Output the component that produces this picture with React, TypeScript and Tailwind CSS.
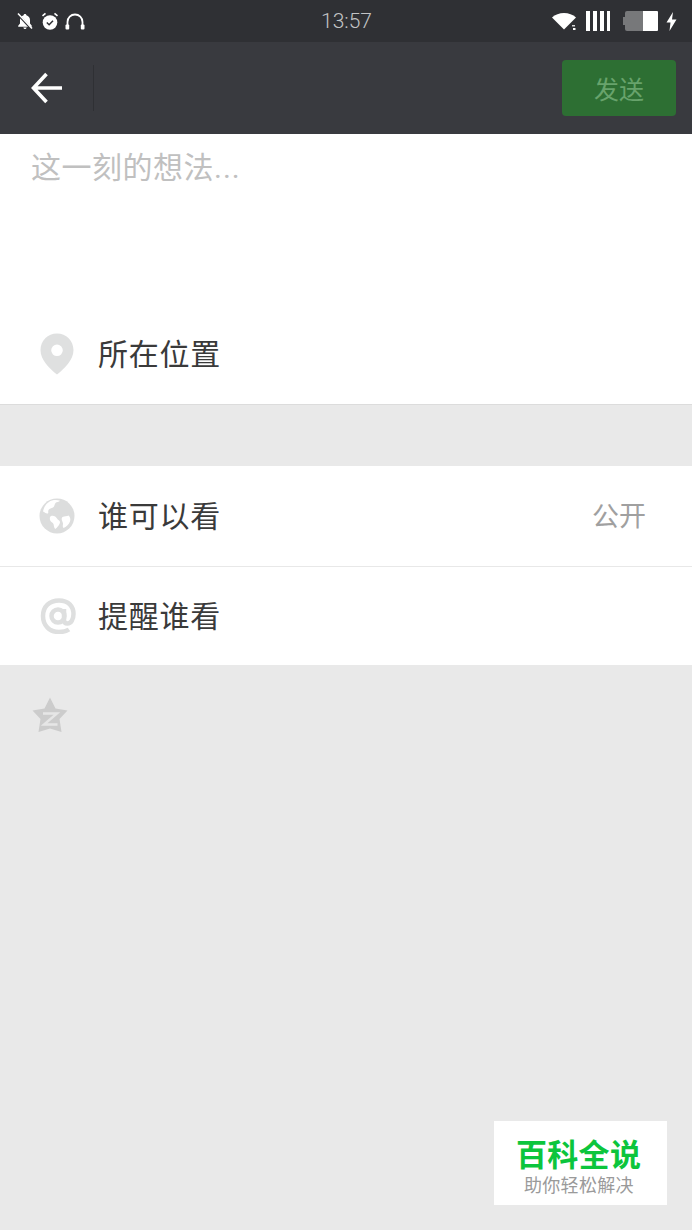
const cjk = { fontFamily: '"Noto Sans CJK SC", sans-serif' };

function StatusLeft() {
  return (
    <div className="flex items-center ml-[17px]">
      <svg width="16" height="17" viewBox="0 0 16 17" fill="#fff">
        <path d="M8 1c-.8 0-1.300.6-1.400 1.200C4.500 2.800 3 4.600 3 7v3.600L1.200 12.800v1h13.600v-1L13 10.600V7c0-2.400-1.500-4.200-3.600-4.800C9.300 1.600 8.800 1 8 1zM6.300 14.600c.1.9.8 1.500 1.700 1.500s1.600-.6 1.700-1.500z" />
        <path d="M1 1.500 14.500 16" stroke="#2f3034" strokeWidth="2.200" />
        <path d="M1 .5 15 15.500" stroke="#fff" strokeWidth="1.500" />
      </svg>
      <svg width="18" height="18" viewBox="0 0 18 18" fill="#fff" className="ml-[8px]">
        <circle cx="9" cy="10.500" r="7.300" />
        <path d="M1.500 3.800 4.500 1.300M16.500 3.800 13.500 1.300" stroke="#fff" strokeWidth="1.600" />
        <path d="M5.800 10.500l2.300 2.200L12 8.700" stroke="#2f3034" strokeWidth="1.500" fill="none" />
      </svg>
      <svg width="20" height="18" viewBox="0 0 20 18" fill="none" className="ml-[6px]">
        <path d="M2.500 16V10a7.500 7.500 0 0 1 15 0v6" stroke="#fff" strokeWidth="1.800" />
        <rect x="0.500" y="12.500" width="3.700" height="5" rx="1" fill="#fff" />
        <rect x="15.800" y="12.500" width="3.700" height="5" rx="1" fill="#fff" />
      </svg>
    </div>
  );
}

function StatusRight() {
  return (
    <div className="flex items-center mr-[15px]">
      <svg width="25" height="18" viewBox="0 0 25 18" fill="#fff">
        <path d="M0 5.500C3 2.500 7.500 1 12 1s9 1.500 12 4.500L12 17.500z" />
        <rect x="20" y="13" width="3" height="1.500" opacity="0.8" />
        <rect x="21" y="16" width="2.500" height="2" />
      </svg>
      <div className="flex gap-[3px] ml-[9px] h-[20px]">
        <div className="w-[4px] bg-white" />
        <div className="w-[4px] bg-white" />
        <div className="w-[4px] bg-white" />
        <div className="w-[3px] bg-white" />
      </div>
      <div className="flex items-center ml-[13px]">
        <div className="w-[2px] h-[8px] bg-[#77787a]" />
        <div className="w-[18px] h-[20px] bg-[#77787a] rounded-l-[2px]" />
        <div className="w-[15px] h-[20px] bg-white rounded-r-[1px]" />
      </div>
      <svg width="11" height="19" viewBox="0 0 11 19" fill="#fff" className="ml-[8px]">
        <path d="M7 0 0.500 10.500H4.500L3.500 19 10.500 7.500H6z" />
      </svg>
    </div>
  );
}

function Row({ icon, label, right, h, border, iconPad, textPad }: { icon: React.ReactNode; label: string; right?: string; h: string; border?: string; iconPad: string; textPad: string }) {
  return (
    <div className={`flex items-center bg-white ${h} ${border ?? ""}`}>
      <div className={`w-[98px] flex shrink-0 ${iconPad}`}>{icon}</div>
      <span className={`text-[30px] leading-none text-[#3a3a3a] tracking-[0.75px] ${textPad}`} style={cjk}>{label}</span>
      {right && <span className={`ml-auto mr-[46px] text-[27px] leading-none text-[#a0a0a0] ${textPad}`} style={cjk}>{right}</span>}
    </div>
  );
}

export default function App() {
  return (
    <div className="w-[692px] h-[1230px] bg-[#e9e9e9] flex flex-col relative overflow-hidden" style={cjk}>
      <div className="h-[42px] bg-[#2f3034] flex items-center justify-between relative shrink-0">
        <StatusLeft />
        <span className="absolute left-[321px] top-[8px] text-[21px] leading-[26px] text-[#c2c3c5] font-light" style={{ fontFamily: 'Roboto, sans-serif' }}>13:57</span>
        <StatusRight />
      </div>
      <div className="h-[92px] bg-[#393a3f] flex items-center shrink-0 relative">
        <svg width="32" height="32" viewBox="0 0 32 32" fill="none" className="ml-[31px] -mt-[1px]">
          <path d="M31 16H3M15.500 2 2.500 16 15.500 30" stroke="#fff" strokeWidth="3.600" />
        </svg>
        <div className="w-px h-[46px] bg-[#2f3034] ml-[30px]" />
        <div className="ml-auto mr-[16px] w-[114px] h-[56px] bg-[#2d6f33] rounded-[4px] flex items-center justify-center text-[25px] leading-none text-[#68a36c]" style={cjk}>发送</div>
      </div>
      <div className="bg-white h-[178px] pl-[31px] pt-[11px] shrink-0">
        <span className="text-[30px] leading-[40px] text-[#c0c0c0] tracking-[0.5px]" style={cjk}>这一刻的想法<span className="tracking-[1px]" style={{ fontFamily: 'Roboto, sans-serif' }}>...</span></span>
      </div>
      <Row
        h="h-[93px] shrink-0"
        border="border-b border-[#dcdcdc]"
        iconPad="pl-[40px] pb-[8px]"
        textPad="pb-[12px]"
        label="所在位置"
        icon={
          <svg width="34" height="42" viewBox="0 0 34 42">
            <path fillRule="evenodd" fill="#dfe0e0" d="M17 0.500C7.800 0.500 0.500 7.800 0.500 17c0 10 9 18.500 16.500 24.500C24.500 35.500 33.500 27 33.500 17 33.500 7.800 26.200 0.500 17 0.500zM17 11.500a5.800 5.800 0 1 1 0 11.600 5.800 5.800 0 0 1 0-11.600z" />
          </svg>
        }
      />
      <div className="h-[61px] shrink-0" />
      <Row
        h="h-[101px] shrink-0"
        border="border-b border-[#e8e8e8]"
        iconPad="pl-[39px]"
        textPad="pb-[4px]"
        label="谁可以看"
        right="公开"
        icon={
          <svg width="36" height="36" viewBox="0 0 36 36">
            <circle cx="18" cy="18" r="17.500" fill="#dcdddd" />
            <path fill="#fff" d="M13 2.500c3-.8 6-.6 8 .2-1 1.300-3.500 1-4.500 2.300-1.300 1.700-.5 3-2.500 4.500-1.500 1-3.500 1-4.500 2.500-.8 1.500.5 3-1 3.500-1.500.3-3-1.500-4.500-2C5 8.500 8 4 13 2.500z" />
            <path fill="#fff" d="M12 18c2.500-.8 5 .5 6 2.500.7 1.500 3 1.800 3 3.500 0 2.500-3 5.500-4.500 7-1.500-.5-1.500-3-2-5-.4-1.500-3-2-3.500-4-.2-1.500-.5-3 1-4z" />
            <path fill="#fff" d="M23.500 19c2-1 4.500-.5 6-1.500 1.300 1 2.500 3.500 1.500 6-1.300 3-3.700 5.500-6.500 6.500-1.200-1.300-.5-3-.5-4.500-.2-2-2.500-4.500-.5-6.500z" />
          </svg>
        }
      />
      <Row
        h="h-[98px] shrink-0"
        iconPad="pl-[40px]"
        textPad="pb-[4px]"
        label="提醒谁看"
        icon={
          <svg width="36" height="36" viewBox="0 0 36 36" fill="none">
            <path d="M29 31.500C26 33.500 22.500 34 19 34 9.500 34 3 27.500 3 18S9.500 2.500 19 2.500 33.500 8.500 33.500 16c0 5.500-2.500 9.500-6 9.500-2.500 0-3.500-1.500-3.500-3.500V11" stroke="#dedfdf" strokeWidth="4.500" />
            <circle cx="18" cy="18" r="6.500" stroke="#dedfdf" strokeWidth="4.500" />
          </svg>
        }
      />
      <div className="pl-[32px] pt-[32px]">
        <svg width="36" height="36" viewBox="0 0 36 36" fill="#cccccc">
          <path d="M18 0.500 23.500 11.500 35.500 13.500 27.500 22 29.500 35 18 31.500 6.500 35 8.500 22 0.500 13.500 12.500 11.500z" />
          <path d="M11 16.500H25L12 27.500H25.500" stroke="#e6e6e6" strokeWidth="2.400" fill="none" />
        </svg>
      </div>
      <div className="absolute left-[494px] top-[1121px] w-[173px] h-[84px] bg-white flex flex-col items-start pl-[22px]">
        <span className="text-[31px] leading-none mt-[16px] font-bold text-[#0cc53c] tracking-[0.3px] whitespace-nowrap" style={cjk}>百科全说</span>
        <span className="text-[18px] leading-none mt-[7px] ml-[8px] text-[#9a9a9a] tracking-[0.3px] whitespace-nowrap" style={cjk}>助你轻松解决</span>
      </div>
    </div>
  );
}
